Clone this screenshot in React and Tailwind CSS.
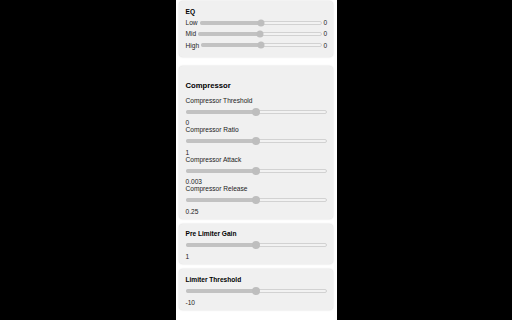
import React from "react";

const Slider = ({ pos = 50, thumb = 8 }) => {
  return (
    <div className="relative flex-1 h-full flex items-center">
      <div className="relative w-full h-[4px] rounded-full bg-[#f2f2f2] border border-[#d2d2d2]">
        <div
          className="absolute left-[-1px] top-[-1px] h-[4px] rounded-full bg-[#c2c2c2]"
          style={{ width: pos + "%" }}
        />
      </div>
      <div
        className="absolute top-1/2 -translate-y-1/2 -translate-x-1/2 rounded-full bg-[#bebebe]"
        style={{ left: pos + "%", width: thumb, height: thumb }}
      />
    </div>
  );
};

const eqRows = ["Low", "Mid", "High"];

const compRows = [
  { label: "Compressor Threshold", value: "0" },
  { label: "Compressor Ratio", value: "1" },
  { label: "Compressor Attack", value: "0.003" },
  { label: "Compressor Release", value: "0.25" },
];

const Card = ({ className, children }) => (
  <div
    className={
      "bg-[#f0f0f0] rounded-[4px] shadow-[0_0_2px_rgba(0,0,0,0.18)] pl-[7px] pr-[5px] " +
      className
    }
  >
    {children}
  </div>
);

const Param = ({ label, value }) => (
  <div>
    <div className="text-[6.6px] leading-[7px] text-[#222]">{label}</div>
    <div className="h-[15.5px] flex pr-[1px]">
      <Slider pos={50} />
    </div>
    <div className="text-[6.6px] leading-[7px] text-[#222]">{value}</div>
  </div>
);

const App = () => {
  return (
    <div
      className="w-[512px] h-[320px] bg-black overflow-hidden"
      style={{ fontFamily: '"Liberation Sans", Arial, sans-serif' }}
    >
      <div className="mx-auto w-[161px] h-[320px] bg-white pl-[3px] pr-[4px] pt-[1px] flex flex-col">
        <Card className="pt-[7px] pb-[6px]">
          <div className="text-[6.6px] leading-[7px] font-bold text-black">EQ</div>
          <div className="mt-[2px]">
            {eqRows.map((r) => (
              <div key={r} className="flex items-center h-[11.3px]">
                <span className="text-[6.6px] leading-[7px] text-[#222] mr-[2px]">
                  {r}
                </span>
                <div className="flex-1 h-full flex">
                  <Slider pos={50} thumb={7} />
                </div>
                <span className="text-[6.6px] leading-[7px] text-[#222] ml-[2px] w-[4px]">
                  0
                </span>
              </div>
            ))}
          </div>
        </Card>

        <Card className="mt-[9px] pt-[15px] pb-[4px]">
          <div className="text-[7.7px] leading-[9px] font-bold text-black mb-[7px]">
            Compressor
          </div>
          {compRows.map((r) => (
            <Param key={r.label} label={r.label} value={r.value} />
          ))}
        </Card>

        <Card className="mt-[5px] pt-[6.5px] pb-[4px]">
          <div className="text-[6.6px] leading-[7px] font-bold text-black">
            Pre Limiter Gain
          </div>
          <div className="h-[15.5px] flex pr-[1px]">
            <Slider pos={50} />
          </div>
          <div className="text-[6.6px] leading-[7px] text-[#222]">1</div>
        </Card>

        <Card className="mt-[5px] pt-[7.5px] pb-[4px]">
          <div className="text-[6.6px] leading-[7px] font-bold text-black">
            Limiter Threshold
          </div>
          <div className="h-[15.5px] flex pr-[1px]">
            <Slider pos={50} />
          </div>
          <div className="text-[6.6px] leading-[7px] text-[#222]">-10</div>
        </Card>
      </div>
    </div>
  );
};

export default App;
